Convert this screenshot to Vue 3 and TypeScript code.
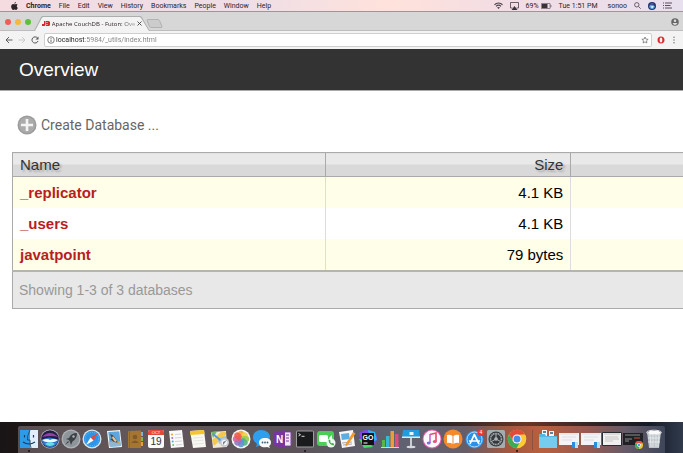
<script setup lang="ts">
import { ref } from 'vue'

interface Database {
  name: string
  size: string
}

const menus: string[] = ['File', 'Edit', 'View', 'History', 'Bookmarks', 'People', 'Window', 'Help']
const databases: Database[] = [
  { name: '_replicator', size: '4.1 KB' },
  { name: '_users', size: '4.1 KB' },
  { name: 'javatpoint', size: '79 bytes' },
]
const address = ref('localhost:5984/_utils/index.html')
const petals: string[] = ['#f7a531', '#f0d23a', '#9ccb4b', '#4fb58a', '#5b93d6', '#8f78c4', '#d6609c', '#ee5b4a']
</script>

<template>
  <div class="screen">
    <nav class="menubar" aria-label="Menu bar">
      <button class="menu" aria-label="Apple">
        <svg width="7" height="8" viewBox="0 0 14 16"><path fill="#2c2428" d="M9.8 0c.1 1.700-1.300 3.500-3.100 3.500C6.500 1.900 8.100.2 9.800 0ZM7 4.600c.8 0 1.700-.8 3.200-.8 1.200 0 2.300.6 3 1.600-2.500 1.500-2.100 5 .5 6-.7 1.900-2.100 4.400-3.600 4.400-1.100 0-1.500-.7-2.900-.7s-1.900.7-2.900.7C2.500 15.800.3 12.200.3 8.900.3 5.700 2.300 3.900 4.300 3.900c1.200 0 2 .7 2.700.7Z" /></svg>
      </button>
      <button class="menu app">Chrome</button>
      <button v-for="menu in menus" :key="menu" class="menu">{{ menu }}</button>
      <div class="status">
        <svg width="9" height="7" viewBox="0 0 18 14" fill="none" stroke="#4a4048" stroke-width="2.200"><path d="M1 5.500c4.500-4.500 11.500-4.500 16 0M4 8.600c3-2.900 7-2.900 10 0" /><path d="m9 14-3-3q3-2.400 6 0Z" fill="#4a4048" stroke="none" /></svg>
        <svg width="9" height="8" viewBox="0 0 18 16"><path d="M5 12H1V1h16v11h-4" fill="none" stroke="#4a4048" stroke-width="1.600" /><path d="m9 8 6 8H3Z" fill="#3a3238" /></svg>
        <span class="battery">69%
          <svg width="11" height="6" viewBox="0 0 22 12"><rect x=".7" y=".7" width="17.600" height="10.600" rx="1.500" fill="none" stroke="#4a4048" stroke-width="1.400" /><path fill="#3a3238" d="M2 2h11v8H2zM19.500 4q3 2 0 4Z" /></svg>
        </span>
        <span class="clock">Tue 1:51 PM</span>
        <span class="user">sonoo</span>
        <svg class="search" width="7" height="7" viewBox="0 0 14 14" fill="none" stroke="#4a4048" stroke-width="1.600"><circle cx="5.600" cy="5.600" r="4.400" /><path d="m9 9 4.300 4.300" /></svg>
        <svg width="8" height="8" viewBox="0 0 16 16"><circle cx="8" cy="8" r="8" fill="#24346b" /><path d="M2 8q6-6 12 1-2 6-7 5Q2 13 2 8Z" fill="#4f9fe0" /><path d="M5 9q4-2 7 0l-4 4Z" fill="#d8f5ff" /><path d="M3 5q5-5 10 0-5-2-10 0Z" fill="#8a56b7" /></svg>
        <svg width="9" height="7" viewBox="0 0 18 14"><path stroke="#4a4048" stroke-width="1.800" d="M0 2h2M4 2h14M0 7h2M4 7h11M0 12h2M4 12h14" /></svg>
      </div>
    </nav>

    <header class="tabstrip">
      <div class="lights">
        <button class="light close" aria-label="Close window"></button>
        <button class="light shrink" aria-label="Minimise window"></button>
        <button class="light grow" aria-label="Zoom window"></button>
      </div>
      <div class="tab">
        <svg class="favicon" width="8" height="5" viewBox="0 0 16 10"><path fill="#d8242c" d="M0 6h4V0h3v7q0 3-3 3H0zM8 0h5q3 0 3 3v4q0 3-3 3H8V7h4V6H8V4h4V3H8z" /></svg>
        <span class="title">Apache CouchDB - Futon: Ove</span>
        <button class="tab-close" aria-label="Close tab"><svg width="5" height="5" viewBox="0 0 10 10"><path stroke="#444" stroke-width="1.800" d="m1 1 8 8M9 1 1 9" /></svg></button>
      </div>
      <button class="new-tab" aria-label="New tab"><svg width="17" height="9" viewBox="0 0 17 9"><path d="M2 .5h10q1 0 1.500 1l2.500 6q.3 1-1 1H5q-1 0-1.500-1L1 1.500Q.8.500 2 .5Z" fill="#cdcccc" stroke="#aaa" stroke-width=".8" /></svg></button>
      <button class="profile" aria-label="Profile"><svg width="8" height="8" viewBox="0 0 16 16"><circle cx="8" cy="8" r="7.500" fill="#666" /><circle cx="8" cy="5.500" r="2.600" fill="#ddd" /><path d="M3 10h10q-2 4-5 4t-5-4Z" fill="#ddd" /></svg></button>
    </header>

    <div class="toolbar">
      <button aria-label="Back"><svg width="8" height="8" viewBox="0 0 16 16" fill="none" stroke="#555" stroke-width="1.900"><path d="M15 8H2M8 2 2 8l6 6" /></svg></button>
      <button aria-label="Forward"><svg width="8" height="8" viewBox="0 0 16 16" fill="none" stroke="#c8c8c8" stroke-width="1.900"><path d="M1 8h13M8 2l6 6-6 6" /></svg></button>
      <button aria-label="Reload"><svg width="8" height="8" viewBox="0 0 16 16"><path d="M13 4a6.200 6.200 0 1 0 1 6" fill="none" stroke="#555" stroke-width="2" /><path fill="#555" d="M15 1v6H9z" /></svg></button>
      <div class="address">
        <svg width="8" height="8" viewBox="0 0 16 16"><circle cx="8" cy="8" r="6.500" fill="none" stroke="#555" stroke-width="1.500" /><path stroke="#555" stroke-width="1.700" d="M8 7v5M8 4v1.800" /></svg>
        <input v-model="address" type="text" aria-label="Address" spellcheck="false" />
        <button aria-label="Bookmark"><svg width="8" height="8" viewBox="0 0 16 16"><path d="m8 2 1.800 4.200 4.500.4-3.400 3 1 4.400L8 11.700 4.100 14l1-4.400-3.400-3 4.500-.4Z" fill="none" stroke="#666" stroke-width="1.400" /></svg></button>
      </div>
      <button aria-label="Extension"><svg width="8" height="8" viewBox="0 0 16 16"><path fill-rule="evenodd" d="M8 1C3.500 1 1 4 1 8s2.500 7 7 7 7-3 7-7-2.500-7-7-7Zm0 2c2 0 2.700 2 2.700 5S10 13 8 13s-2.700-2-2.700-5S6 3 8 3Z" fill="#e3242b" /></svg></button>
      <button aria-label="More"><svg width="8" height="8" viewBox="0 0 16 16" fill="#777"><circle cx="8" cy="2.500" r="1.500" /><circle cx="8" cy="8" r="1.500" /><circle cx="8" cy="13.500" r="1.500" /></svg></button>
    </div>

    <main class="page">
      <h1>Overview</h1>
      <div class="content">
        <button class="create">
          <svg width="20" height="20" viewBox="0 0 20 20"><circle cx="10" cy="10" r="9.500" fill="#9b9b9b" /><circle cx="10" cy="10" r="8" fill="#ababab" /><path d="M10 4v12M4 10h12" stroke="#f4f4f4" stroke-width="2.600" /></svg>
          Create Database ...
        </button>
        <div class="listing">
          <table>
            <thead>
              <tr><th class="name">Name</th><th class="size">Size</th><th class="rest"></th></tr>
            </thead>
            <tbody>
              <tr v-for="db in databases" :key="db.name">
                <td><a :href="'#' + db.name">{{ db.name }}</a></td>
                <td class="size">{{ db.size }}</td>
                <td></td>
              </tr>
            </tbody>
            <tfoot>
              <tr><td colspan="3">Showing 1-3 of 3 databases</td></tr>
            </tfoot>
          </table>
        </div>
      </div>
    </main>

    <footer class="desktop">
      <div class="dock">
        <button class="item running" aria-label="Finder"><svg viewBox="0 0 20 20"><path fill="#2d9bea" d="M1 1h10v18H1z" /><path fill="#dfeefa" d="M11 1h8v18h-8z" /><path d="M11 1Q8 7 8.500 11H11q-.2 4 1 8" fill="none" stroke="#173b62" stroke-width=".8" /><path d="M5.500 6v2.500M14.500 6v2.500M4 13q6 4 12 0" fill="none" stroke="#173b62" stroke-width="1.200" /></svg></button>
        <button class="item" aria-label="Siri"><svg viewBox="0 0 20 20"><circle cx="10" cy="10" r="9.500" fill="#b9bccb" /><circle cx="10" cy="10" r="8.800" fill="#231c43" /><path d="M2 8q8-8 16 0-6-2-16 0Z" fill="#9440a7" /><path d="M1.500 11q7-5 17 0-2 7-8 7.500Q3 18 1.500 11Z" fill="#3175c9" /><path d="M2 11q6-2 8 0 3-2 8 0-4 3-8 2-4 1-8-2Z" fill="#eefaff" /><path d="M5 15q5-4 10 0-5 4-10 0Z" fill="#63dfe9" /></svg></button>
        <button class="item" aria-label="Launchpad"><svg viewBox="0 0 20 20"><circle cx="10" cy="10" r="9.500" fill="#aeb3b7" /><circle cx="10" cy="10" r="8.200" fill="#8f969b" /><path d="M16 4q-6 0-8 5l-3 1 3 1 1 2 1 3 1.500-3.500Q16 10 16 4ZM7 12l-3 4 4-3Z" fill="#3c4145" /><circle cx="12.500" cy="7.500" r="1.200" fill="#aeb3b7" /></svg></button>
        <button class="item" aria-label="Safari"><svg viewBox="0 0 20 20"><circle cx="10" cy="10" r="9.500" fill="#dce4ea" /><circle cx="10" cy="10" r="8.200" fill="#2c95e8" /><circle cx="10" cy="10" r="6.800" fill="none" stroke="#9bd4fa" stroke-width="1" stroke-dasharray=".5 1.500" /><path d="m16 4-4.500 7.500-3-3Z" fill="#ee4538" /><path d="m4 16 4.500-7.500 3 3Z" fill="#fff" /></svg></button>
        <button class="item" aria-label="Mail"><svg viewBox="0 0 20 20"><path d="m3 2 13-1 2 17-13 1Z" fill="#fafafa" /><path d="m4.300 3 11-.8L16.900 17l-11 .8Z" fill="#5ba6e1" /><path d="m5 13 11-1 .8 5-11 .8Z" fill="#91b6ce" /><path d="M6 5q4 1 5 4l4 5-5-1-4-3 2-.5Z" fill="#5a4133" /><path d="m9 7 4 5-2 1-3-4Z" fill="#d8c9ac" /><path d="m13 12 2.500 1.500-2 .5Z" fill="#efaa33" /></svg></button>
        <button class="item" aria-label="Contacts"><svg viewBox="0 0 20 20"><path fill="#78b6d8" d="M15 3h3v4h-3z" /><path fill="#7cb955" d="M15 8h3v4h-3z" /><path fill="#e4a13a" d="M15 13h3v4h-3z" /><path fill="#a57632" d="m3 2 13-.5V19H3z" /><path stroke="#8f652d" d="M4.500 2v17" /><circle cx="10" cy="8" r="2.300" fill="#805a28" /><path d="M6 14q4-5 8 0Z" fill="#805a28" /></svg></button>
        <button class="item" aria-label="Calendar"><svg viewBox="0 0 20 20"><rect x="2" y="1" width="16" height="18" rx="2" fill="#fafafa" /><path d="M2 6V3q0-2 2-2h12q2 0 2 2v3Z" fill="#e6473d" /><text x="10" y="5.200" class="glyph month">OCT</text><text x="10" y="15.500" class="glyph day">19</text></svg></button>
        <button class="item" aria-label="Reminders"><svg viewBox="0 0 20 20"><path d="m2 2 13-1 2 17-13 1Z" fill="#fafafa" /><path d="M8 5.500 14 5M8 9l6.500-.5M8 12.500l7-.5M9 16l6-.5" stroke="#c8c8c8" stroke-width=".8" /><circle cx="5" cy="5.500" r="1" fill="#f29a38" /><circle cx="5.300" cy="9" r="1" fill="#ad68d2" /><circle cx="5.700" cy="12.500" r="1" fill="#4ca8e8" /><circle cx="6.200" cy="16" r="1" fill="#67c655" /></svg></button>
        <button class="item" aria-label="Notes"><svg viewBox="0 0 20 20"><path d="m2 2 14-1 2 17-13 1Z" fill="#f8f7f1" /><path d="m2 2 14-1 .5 4-14 1Z" fill="#f8c42d" /><path d="m5 9 10-.8M5.300 12l10-.8m-9.700 4 10-.8" stroke="#ddd" stroke-width=".7" /></svg></button>
        <button class="item" aria-label="Maps"><svg viewBox="0 0 20 20"><path d="m1 3 15-1 1 16-14 1Z" fill="#efe9d7" /><path d="m1 3 6-.4L3 9Z" fill="#72b86b" /><path d="m2 11 9-8 5 0v3L4 17Z" fill="#f4c952" /><path d="m8 10 8-3v4l-7 4Z" fill="#8bc5ea" /><path d="m3 5 12 10" stroke="#5b95d5" stroke-width="1.700" /><circle cx="14.500" cy="13.500" r="4.500" fill="#c6cbd1" /><circle cx="14.500" cy="13.500" r="2.800" fill="#f3f3f3" /><path d="m17 11-4 5v-3Z" fill="#718090" /></svg></button>
        <button class="item" aria-label="Photos"><svg viewBox="0 0 20 20"><circle cx="10" cy="10" r="9.500" fill="#f6f5f2" /><g v-for="(petal, i) in petals" :key="petal" :transform="`rotate(${i * 45} 10 10)`"><rect x="7" y="1.800" width="6" height="8" rx="3" :fill="petal" opacity=".9" /></g></svg></button>
        <button class="item" aria-label="Messages"><svg viewBox="0 0 20 20"><path d="M9 1c5 0 9 3 9 7s-4 8-9 8l-5 2 1-3C-3 9 2 1 9 1Z" fill="#2e9eee" /><path d="M13 9c4 0 6 2 6 4.500 0 1.500-1 3-2 3.500l1 2-3-1c-5 1-8-1-8-4.500C7 11 9 9 13 9Z" fill="#fafafa" /><g fill="#3b5e7b"><circle cx="10.500" cy="13.500" r=".9" /><circle cx="13" cy="13.500" r=".9" /><circle cx="15.500" cy="13.500" r=".9" /></g></svg></button>
        <button class="item" aria-label="OneNote"><svg viewBox="0 0 20 20"><path fill="#eee9f3" stroke="#79359b" stroke-width=".8" d="M10 3h8v14h-8z" /><path d="M13 6h3M13 9h3M13 12h3" stroke="#79359b" /><path d="M18.500 4v12" stroke="#83479f" stroke-width="1.500" stroke-dasharray="2 1" /><path fill="#79359b" d="m1 3 11-2v18L1 17z" /><text x="6.500" y="14" class="glyph letter">N</text></svg></button>
        <button class="item running" aria-label="Terminal"><svg viewBox="0 0 20 20"><rect x="1" y="1.500" width="18" height="17" rx="1.500" fill="#9d9d9d" /><path fill="#191b1c" d="M2 2.500h16v15H2z" /><path d="m3.500 4.500 2 1.200-2 1.200M6.500 7.300h3" fill="none" stroke="#eee" stroke-width=".9" /></svg></button>
        <button class="item" aria-label="FaceTime"><svg viewBox="0 0 20 20"><rect x="1" y="2" width="17" height="15" rx="3" fill="#4ccd57" /><rect x="3" y="6" width="9" height="7" rx="1.500" fill="#fff" /><path d="m13 9 3-3v7Z" fill="#fff" /><circle cx="15" cy="14" r="4.500" fill="#f2f4f2" /><path d="M12.500 11.500q.5 4 5 5l.7-1.500-1.500-1-1 .6-1.700-1.700.6-1-1-1.300Z" fill="#37ac44" /></svg></button>
        <button class="item" aria-label="Pages"><svg viewBox="0 0 20 20"><path d="m2 3 14-2 2 16-13 2Z" fill="#f7f7f7" /><path d="m4 5 8-1 .8 6-8 1Z" fill="#5dade2" /><path d="m5 14 10-1M6 16l9-1" stroke="#aaa" /><path d="m16 3 2.500 1.500-8 12-2 1 .2-2.500Z" fill="#f49a28" /></svg></button>
        <button class="item" aria-label="GoLand"><svg viewBox="0 0 20 20"><path d="m1 4 6-3 7 1 5 5-1 6-5 6-9-2Z" fill="#8645ef" /><path d="m10 1 7 2 2 8-6 2Z" fill="#25b7ed" /><path d="m1 10 8 2 6 6-9 1Z" fill="#43db69" /><path fill="#111" d="M4 4h12v12H4z" /><text x="10" y="10.500" class="glyph go">GO</text><path fill="#fff" d="M5.500 13.500h4v1h-4z" /></svg></button>
        <button class="item" aria-label="Numbers"><svg viewBox="0 0 20 20"><rect x="2" y="11" width="3" height="7" fill="#52b947" /><rect x="6" y="7" width="3.500" height="11" fill="#35b7d5" /><rect x="10.500" y="2" width="3.500" height="16" fill="#f19b35" /><rect x="15" y="5" width="3.500" height="13" fill="#df4b7f" /><path d="M1 18.500h18" stroke="#d6d6d6" /></svg></button>
        <button class="item" aria-label="Keynote"><svg viewBox="0 0 20 20"><path d="M2 1h16l1 8H1Z" fill="#229be0" /><path d="M1 7.500h18V9H1z" fill="#d9edf7" /><path d="M8.500 3h4v3h-4z" fill="#e6f5ff" /><path d="M9 9h2v9H9z" fill="#c7cdd1" /><ellipse cx="10" cy="18" rx="4.500" ry="1.200" fill="#d5d9db" /></svg></button>
        <button class="item" aria-label="iTunes"><svg viewBox="0 0 20 20"><circle cx="10" cy="10" r="9.500" fill="#e95cb0" /><circle cx="10" cy="10" r="8.500" fill="#fafafa" /><path d="M8 5.500 14 4v8.500" fill="none" stroke="#ed4a6d" stroke-width="1.600" /><path d="M8 5v9" stroke="#bb57cf" stroke-width="1.400" /><ellipse cx="6.700" cy="14" rx="2" ry="1.600" fill="#7d72df" /><ellipse cx="12.800" cy="12.500" rx="2" ry="1.600" fill="#ef4f7f" /></svg></button>
        <button class="item" aria-label="iBooks"><svg viewBox="0 0 20 20"><circle cx="10" cy="10" r="9.500" fill="#f58a2c" /><path d="M9.500 7q-2-2-5.500-1v8q3-.8 5.500 1ZM10.500 7q2-2 5.500-1v8q-3-.8-5.500 1Z" fill="#fff" /></svg></button>
        <button class="item" aria-label="App Store"><svg viewBox="0 0 20 20"><circle cx="9.500" cy="10.500" r="9" fill="#2b91e8" /><circle cx="9.500" cy="10.500" r="7.500" fill="none" stroke="#b4dcfb" /><path d="m9.500 5-4.500 10M9 5l5 10M4 12h11" stroke="#fff" stroke-width="1.700" /><circle cx="16" cy="3.500" r="3.500" fill="#e8382f" /><text x="16" y="5.300" class="glyph badge">4</text></svg></button>
        <button class="item" aria-label="System Preferences"><svg viewBox="0 0 20 20"><rect x="1" y="1" width="18" height="18" rx="1.500" fill="#a5acaf" /><circle cx="10" cy="10" r="7.500" fill="#34393c" /><circle cx="10" cy="10" r="5.500" fill="none" stroke="#aab0b3" stroke-width="1.600" stroke-dasharray="1.200 .5" /><circle cx="10" cy="10" r="1.800" fill="#b9bec0" /><path d="M10 10V5M10 10l4.500 2.500M10 10l-4.500 2.500" stroke="#aab0b3" /></svg></button>
        <button class="item running" aria-label="Google Chrome"><svg viewBox="0 0 20 20"><circle cx="10" cy="10" r="9.300" fill="#fbcb2f" /><path d="M2 5.300a9.300 9.300 0 0 1 16 0L10 6 6 12Z" fill="#e44a3c" /><path d="M2 5.300A9.300 9.300 0 0 0 9.500 19.300L13.500 12 6 12Z" fill="#3daa58" /><circle cx="10" cy="10" r="4.500" fill="#fff" /><circle cx="10" cy="10" r="3.500" fill="#468bf1" /></svg></button>
        <span class="divider"></span>
        <button class="item" aria-label="Documents folder"><svg viewBox="0 0 20 20"><path fill="#f5f5f5" d="M4 1h5v7H4zM11 2h5v6h-5z" /><path d="M5 3h3M12 4h3" stroke="#2a5c80" stroke-width="1.500" /><path fill="#54b6e2" d="M1 5h6l1 2h11v12H1z" /><path fill="#76ccee" d="M1 8h18v11H1z" /></svg></button>
        <button class="item" aria-label="Minimised Finder window 1"><svg viewBox="0 0 20 20"><path fill="#f4f4f6" d="M0 4h20v12H0z" /><path d="M1 5h18M3 8h14M3 11h10" stroke="#d3d4d8" stroke-width=".7" /><path fill="#278fe1" d="M13 13h3v6h-3z" /><path fill="#b9e1fb" d="M16 13h3v6h-3z" /></svg></button>
        <button class="item" aria-label="Minimised Finder window 2"><svg viewBox="0 0 20 20"><path fill="#f4f4f6" d="M0 4h20v12H0z" /><path d="M1 5h18M3 8h14M3 11h10" stroke="#d3d4d8" stroke-width=".7" /><path fill="#278fe1" d="M13 13h3v6h-3z" /><path fill="#b9e1fb" d="M16 13h3v6h-3z" /></svg></button>
        <button class="item" aria-label="Minimised Terminal window"><svg viewBox="0 0 20 20"><path fill="#f0f0f0" stroke="#292d32" d="M.5 3.500h19v13H.5z" /><path d="M2 5h16M3 8h13M3 10h14M3 12h8" stroke="#bbb" stroke-width=".8" /></svg></button>
        <button class="item" aria-label="Minimised Chrome window"><svg viewBox="0 0 20 20"><path fill="#202124" d="M0 4h20v12H0z" /><path d="M2 6h15M2 10h7M2 12h4" stroke="#aaa" stroke-width=".8" /><path d="M11 9h6" stroke="#d24937" /><circle cx="16" cy="16" r="4" fill="#f4c532" /><path d="M12.500 14a4 4 0 0 1 7 0L16 15Z" fill="#e34c3c" /><path d="M12.500 14A4 4 0 0 0 16 20v-4Z" fill="#3daa58" /><circle cx="16" cy="16" r="1.600" fill="#468bf1" stroke="#fff" stroke-width=".7" /></svg></button>
        <button class="item" aria-label="Trash"><svg viewBox="0 0 20 20"><path d="m3 3 14 0-2 16H5Z" fill="#bdc4c9" /><path d="m6 5 1 13M9 5v13M12 5v13M15 5l-1 13M4 9h12M4 13h12" stroke="#e7edf0" stroke-width=".8" /><path d="m4 3 3-2 3 1 4-1 3 3-3 2-4-1-4 1Z" fill="#fafafa" /><ellipse cx="10" cy="3.500" rx="7.500" ry="2.300" fill="none" stroke="#d8dde0" stroke-width=".9" /></svg></button>
      </div>
    </footer>
  </div>
</template>

<style>
body {
  margin: 0;
}
</style>

<style scoped>
.screen {
  display: flex;
  flex-direction: column;
  min-height: 100vh;
  overflow: hidden;
  font-family: Roboto, "Liberation Sans", sans-serif;
  font-size: 7px;
  line-height: 8px;
  color: #2c2428;
}

button {
  padding: 0;
  border: 0;
  background: none;
  font: inherit;
  color: inherit;
}

svg {
  display: block;
  flex: none;
}

.menubar {
  display: flex;
  align-items: center;
  gap: 8px;
  height: 11px;
  padding: 0 11px;
  border-bottom: 1px solid #a09497;
  background: linear-gradient(90deg, #f4dce1, #eedee7 36%, #ffe2db 57%, #f2dde5 75%, #e8e0ee);
}

.menu.app {
  font-weight: 700;
}

.status {
  display: flex;
  align-items: center;
  gap: 7px;
  margin-left: auto;
}

.battery {
  display: flex;
  align-items: center;
  gap: 2px;
}

.user {
  margin-left: 3px;
}

.tabstrip {
  display: flex;
  align-items: flex-end;
  height: 19px;
  padding: 0 4px 0 5px;
  background: #d8d7d7;
  box-shadow: inset 0 -1px #bdbdbd;
}

.lights {
  display: flex;
  gap: 4px;
  align-self: center;
}

.light {
  width: 6px;
  height: 6px;
  border-radius: 50%;
}

.close {
  background: #ec5f56;
}

.shrink {
  background: #f5b73d;
}

.grow {
  background: #5ac13d;
}

.tab {
  display: flex;
  position: relative;
  align-items: center;
  justify-content: space-between;
  width: 100px;
  height: 15px;
  margin-left: 3px;
  padding: 0 8px;
  background: #adadad;
  clip-path: polygon(0 100%, 6% 8%, 7% 0, 92% 0, 93% 8%, 100% 100%);
}

.tab::before {
  content: "";
  position: absolute;
  inset: 1px 1px 0;
  background: #f3f3f3;
  clip-path: polygon(0 100%, 6% 8%, 7% 0, 92% 0, 93% 8%, 100% 100%);
}

.tab > * {
  position: relative;
}

.title {
  font-family: "Open Sans", sans-serif;
  font-size: 6px;
  white-space: nowrap;
  mask-image: linear-gradient(90deg, #000 82%, rgb(0 0 0 / 30%));
}

.new-tab {
  margin: 0 0 3px -4px;
}

.profile {
  align-self: center;
  margin-left: auto;
}

.toolbar {
  display: flex;
  align-items: center;
  gap: 5px;
  height: 18px;
  padding: 0 5px;
  background: #f3f3f3;
}

.address {
  display: flex;
  flex: 1;
  align-items: center;
  gap: 1px;
  box-sizing: border-box;
  height: 14px;
  padding: 0 2px;
  border: 1px solid #cfcfcf;
  border-radius: 2px;
  background: #fff;
}

.address input {
  flex: 1;
  min-width: 0;
  height: 10px;
  padding: 0;
  border: 0;
  outline: 0;
  font: inherit;
  color: transparent;
  background: linear-gradient(90deg, #222 29px, #808080 29px);
  background-clip: text;
}

.page {
  flex: 1;
  background: #fff;
  font-family: "Liberation Sans", Arial, sans-serif;
}

h1 {
  margin: 0;
  padding: 0 19px;
  background: #333;
  border-bottom: 1px solid #aaa;
  color: #fff;
  font-size: 19px;
  font-weight: 400;
  line-height: 41px;
}

.content {
  padding: 24px 0 0 12px;
}

.create {
  display: flex;
  align-items: center;
  gap: 4px;
  padding: 0 5px;
  color: #666;
  font-family: Roboto, sans-serif;
  font-size: 14px;
  line-height: 20px;
}

.listing {
  margin-top: 17px;
  overflow: hidden;
}

table {
  width: 120%;
  table-layout: fixed;
  border-collapse: collapse;
  border: 1px solid #aaa;
  font-size: 15px;
}

th {
  height: 23px;
  padding: 0 7px;
  border: 1px solid #aaa;
  background: linear-gradient(#e9e9e9 50%, #d9d9d9 50%);
  color: #333;
  font-weight: 400;
  text-align: left;
  text-shadow: 2px 2px 2px #aaa;
}

th.name {
  width: 37%;
}

th.size {
  width: 28.7%;
}

.size {
  text-align: right;
}

td {
  height: 31px;
  padding: 0 7px;
  border-right: 1px solid #ddd;
  color: #000;
}

tbody tr:nth-child(odd) {
  background: #fffee9;
}

a {
  color: #b91d1d;
  font-weight: 700;
  text-decoration: none;
}

tfoot td {
  height: 36px;
  padding: 0 6px;
  border: 1px solid #aaa;
  border-top: 2px solid #b4b4b0;
  background: #e8e8e8;
  color: #999;
  font-size: 14px;
}

.desktop {
  padding: 4px 18px 0;
  background: linear-gradient(90deg, #191415, #251c1d 12%, #17191e 48%, #2c2525 65%, #663726 77%, #312424 87%, #151b28 95%, #303a4b);
}

.dock {
  display: flex;
  height: 27px;
  border-radius: 2px 2px 0 0;
  background: linear-gradient(90deg, #594e52, #62575b 20%, #5b5358 43%, #5f6272 58%, #665d68 69%, #a4583f 76%, #b8603f 81%, #965a50 88%, #665a68 94%, #3e4659);
}

.item {
  display: flex;
  position: relative;
  flex: 1;
  min-width: 0;
  justify-content: center;
  padding-top: 3px;
}

.item svg {
  width: 20px;
  height: 20px;
}

.running::after {
  content: "";
  position: absolute;
  bottom: 1px;
  width: 2px;
  height: 2px;
  border-radius: 50%;
  background: #171214;
}

.divider {
  width: 10px;
  background: linear-gradient(#8a5040, #8a5040) center / 1px 20px no-repeat;
}

.glyph {
  font-family: "Liberation Sans", sans-serif;
  text-anchor: middle;
}

.month {
  fill: #fff;
  font-size: 4px;
}

.day {
  fill: #333;
  font-size: 10px;
}

.letter {
  fill: #fff;
  font-size: 10px;
  font-weight: 700;
}

.go {
  fill: #fff;
  font-size: 7px;
  font-weight: 700;
}

.badge {
  fill: #fff;
  font-size: 5px;
}
</style>
